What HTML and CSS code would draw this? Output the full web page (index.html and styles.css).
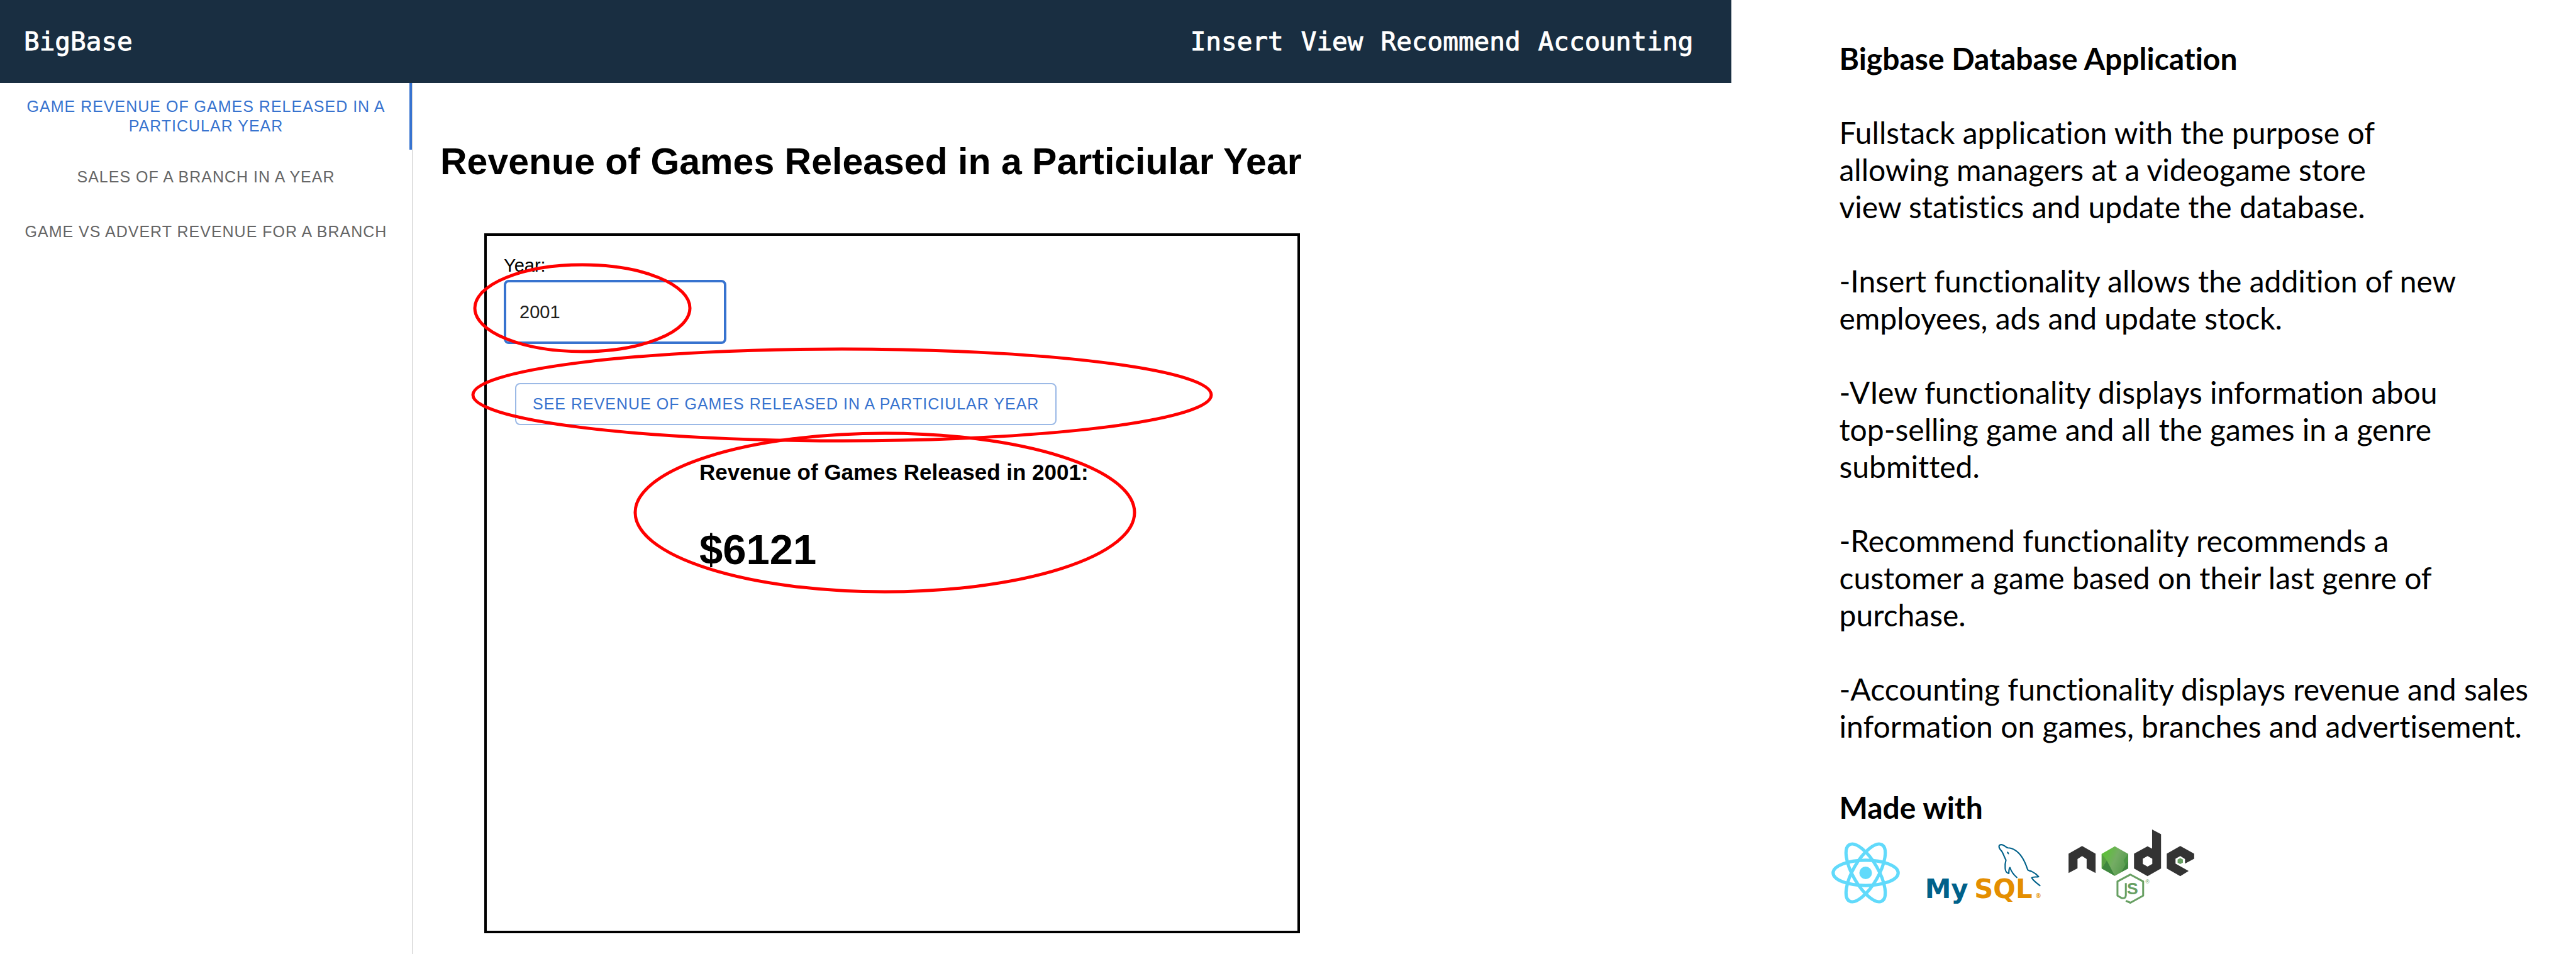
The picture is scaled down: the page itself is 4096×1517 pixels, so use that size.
FILE: index.html
```html
<!DOCTYPE html>
<html lang="en">
<head>
<meta charset="utf-8">
<title>BigBase</title>
<link rel="stylesheet" href="styles.css">
</head>
<body>
<div class="page">
  <div class="app">
    <header class="topbar">
      <a class="brand" href="#">BigBase</a>
      <nav class="menu">
        <a href="#">Insert</a>
        <a href="#">View</a>
        <a href="#">Recommend</a>
        <a href="#">Accounting</a>
      </nav>
    </header>
    <div class="workspace">
      <aside class="tabs">
        <button class="tab tab-active" type="button">Game revenue of games released in a particular year</button>
        <button class="tab" type="button">Sales of a branch in a year</button>
        <button class="tab" type="button">Game vs advert revenue for a branch</button>
      </aside>
      <main class="content">
        <h1 class="title">Revenue of Games Released in a Particiular Year</h1>
        <section class="panel">
          <label class="label" for="year">Year:</label>
          <input class="field" id="year" type="text" value="2001">
          <button class="submit" type="button">See revenue of games released in a particiular year</button>
          <div class="result">
            <h2 class="result-title">Revenue of Games Released in 2001:</h2>
            <p class="result-value">$6121</p>
          </div>
          <svg class="marks" width="1289" height="600" aria-hidden="true">
            <ellipse cx="152" cy="115" rx="171" ry="69"/>
            <ellipse cx="565" cy="253" rx="587" ry="73"/>
            <ellipse cx="633" cy="440" rx="397" ry="126"/>
          </svg>
        </section>
      </main>
    </div>
  </div>
  <article class="notes">
    <div class="notes-text">
      <h2 class="notes-title">Bigbase Database Application</h2>
      <p>Fullstack application with the purpose of<br>allowing managers at a videogame store<br>view statistics and update the database.</p>
      <p>-Insert functionality allows the addition of new<br>employees, ads and update stock.</p>
      <p>-VIew functionality displays information abou<br>top-selling game and all the games in a genre<br>submitted.</p>
      <p>-Recommend functionality recommends a<br>customer a game based on their last genre of<br>purchase.</p>
      <p>-Accounting functionality displays revenue and sales<br>information on games, branches and advertisement.</p>
    </div>
    <h2 class="notes-title made-with">Made with</h2>
    <div class="logos">
      <svg width="109" height="98" viewBox="57 346 358 322" role="img" aria-label="React">
        <g fill="none" stroke="#61dafb" stroke-width="17">
          <ellipse cx="236" cy="507" rx="170" ry="66"/>
          <ellipse cx="236" cy="507" rx="170" ry="66" transform="rotate(60 236 507)"/>
          <ellipse cx="236" cy="507" rx="170" ry="66" transform="rotate(120 236 507)"/>
        </g>
        <circle cx="236" cy="507" r="33" fill="#61dafb"/>
      </svg>
      <svg width="182" height="95" viewBox="42 44 600 312" role="img" aria-label="MySQL">
        <g fill="none" stroke="#00618a" stroke-width="7" stroke-linejoin="round" stroke-linecap="round">
          <path d="M513 219C500 208 486 194 477 167C470 176 472 188 471 198C461 196 453 186 452 172C450 153 452 142 456 128C447 113 444 97 434 82C427 73 417 64 420 54C424 44 437 46 446 52C455 57 459 62 467 64C481 64 493 69 505 77C536 96 554 131 569 176C572 186 582 183 592 188C607 195 617 203 627 215C615 219 601 213 591 221C600 238 616 247 634 262"/>
          <path stroke-width="4" d="M463 86Q469 86 470 96Q464 94 463 86" fill="#00618a"/>
        </g>
        <text class="mysql-word" x="31" y="327" fill="#00618a">My</text>
        <text class="mysql-word" x="290" y="327" fill="#e48e00">SQL</text>
        <text class="mysql-mark" x="610" y="327" fill="#e48e00">®</text>
      </svg>
      <svg width="200" height="118" viewBox="45 30 660 390" role="img" aria-label="Node.js">
        <defs>
          <linearGradient id="leaf" x1="220" y1="160" x2="358" y2="220" gradientUnits="userSpaceOnUse">
            <stop offset="0.1" stop-color="#5fbf3c"/><stop offset="0.5" stop-color="#74ac64"/><stop offset="1" stop-color="#52994b"/>
          </linearGradient>
        </defs>
        <path fill="#333" d="M45 157L116 117L187 157V259L140 234V185L116 170L92 185V234L45 259Z"/>
        <path fill="url(#leaf)" d="M288 118L358 158V235L288 274L219 235V158Z"/>
        <path fill="#3f873f" d="M219 235L246 193L288 274ZM358 194V235L322 254Z"/>
        <path fill="#58a044" d="M219 158L246 193L219 235Z"/>
        <path fill="#4a9644" d="M334 193L358 158V194L344 217Z"/>
        <path fill="#333" fill-rule="evenodd" d="M460 118L484 131V30L531 55V235L460 275L389 235V157ZM460 170L435 184V211L460 225L485 211V184Z"/>
        <path fill="#333" d="M632 117L705 157V184L657 209V185L632 170L607 184V209L676 248L632 275L561 235V157Z"/>
        <path fill="#68a063" d="M632 180L646 188V204L632 212L618 204V188Z"/>
        <path fill="none" stroke="#68a063" stroke-width="10" stroke-linejoin="round" d="M346 405L370 415L437 378V303L370 267L302 303V378L323 390Q345 396 346 376V312"/>
        <text class="node-word" x="352" y="372" fill="#68a063">S</text>
        <text class="node-mark" x="449" y="313" fill="#68a063">®</text>
      </svg>
    </div>
  </article>
</div>
</body>
</html>
```
FILE: styles.css
```css
* {
  box-sizing: border-box;
}

body {
  margin: 0;
  background: #fff;
  color: #000;
  font-family: "Liberation Sans", Arial, sans-serif;
}

h1,
h2,
p {
  margin: 0;
}

button,
input {
  font-family: inherit;
}

.page {
  display: flex;
  min-height: 100vh;
}

.app {
  display: flex;
  flex-direction: column;
  flex: 0 0 67.2%;
}

.topbar {
  display: flex;
  align-items: center;
  justify-content: space-between;
  height: 132px;
  padding: 0 60px 0 38px;
  background: #192e41;
  font-family: "DejaVu Sans Mono", monospace;
  font-size: 41px;
  -webkit-text-stroke: 1px #fff;
}

.topbar a {
  color: #fff;
  text-decoration: none;
}

.menu {
  display: flex;
  gap: 28px;
}

.workspace {
  display: flex;
  flex: 1;
}

.tabs {
  display: flex;
  flex-direction: column;
  flex: 0 0 657px;
  border-right: 2px solid #e0e0e0;
}

.tab {
  min-height: 87px;
  padding: 22px 29px;
  border: 0;
  background: none;
  color: #666;
  font-size: 25px;
  line-height: 31px;
  letter-spacing: 1px;
  text-transform: uppercase;
}

.tab-active {
  border-right: 4px solid #3773cf;
  padding: 22px 25px 22px 29px;
  color: #3773cf;
}

.content {
  display: flex;
  flex-direction: column;
  gap: 81px;
  flex: 1;
  max-width: 1410px;
  padding: 92px 0 33px 43px;
}

.title {
  font-size: 59px;
  line-height: 66px;
  white-space: nowrap;
}

.panel {
  position: relative;
  display: flex;
  flex-direction: column;
  align-items: flex-start;
  flex: 1;
  margin-left: 70px;
  padding: 30px 27px;
  border: 4px solid #000;
}

.label {
  margin-bottom: 6px;
  font-size: 29px;
  line-height: 34px;
}

.field {
  width: 354px;
  height: 102px;
  padding: 0 21px;
  border: 4px solid #3773cf;
  border-radius: 8px;
  background: #fff;
  color: #212121;
  font-size: 29px;
}

.submit {
  height: 67px;
  margin: 62px 0 0 18px;
  padding: 0 26px;
  border: 2px solid #9bb9e6;
  border-radius: 8px;
  background: #fff;
  color: #3773cf;
  font-size: 25px;
  letter-spacing: 1px;
  text-transform: uppercase;
  white-space: nowrap;
}

.result {
  margin: 56px 0 0 311px;
}

.result-title {
  margin-bottom: 66px;
  font-size: 35px;
  line-height: 38px;
}

.result-value {
  font-size: 67px;
  font-weight: bold;
  line-height: 76px;
}

.marks {
  position: absolute;
  top: 0;
  left: 0;
  overflow: visible;
  fill: none;
  stroke: #f00;
  stroke-width: 5px;
  pointer-events: none;
}

.notes {
  flex: 1;
  padding: 63px 0 0 159px;
  font-family: "Lato", sans-serif;
  font-size: 48px;
  font-variant-ligatures: none;
  line-height: 59px;
}

.notes-text {
  display: flex;
  flex-direction: column;
  gap: 59px;
  padding-left: 13px;
  white-space: nowrap;
}

.notes-title {
  font-size: 48px;
  line-height: 59px;
}

.made-with {
  margin-top: 70px;
  padding-left: 13px;
}

.logos {
  display: flex;
  align-items: flex-end;
  gap: 43px;
  margin-top: 6px;
}

.logos svg {
  overflow: visible;
}

.mysql-word {
  font: bold 138px "DejaVu Sans", sans-serif;
}

.mysql-mark {
  font: bold 32px "DejaVu Sans", sans-serif;
}

.node-word {
  font: bold 88px "Liberation Sans", sans-serif;
}

.node-mark {
  font: 28px "Liberation Sans", sans-serif;
}
```
